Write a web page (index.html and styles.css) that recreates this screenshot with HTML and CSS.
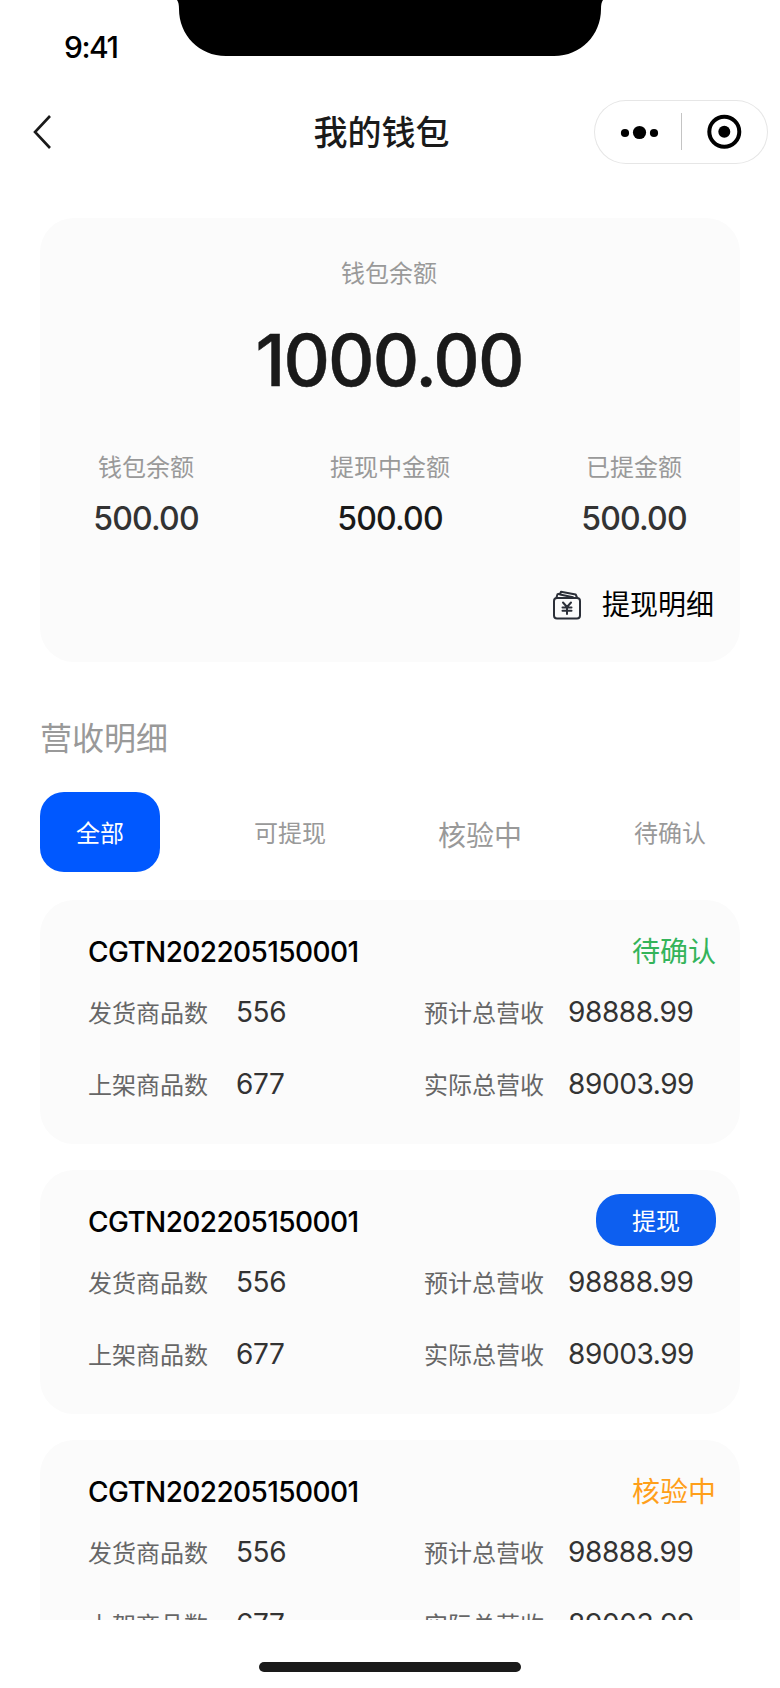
FILE: index.html
```html
<!DOCTYPE html>
<html lang="zh-CN">
<head>
  <meta charset="UTF-8" />
  <title>我的钱包</title>
  <link rel="stylesheet" href="styles.css">
</head>
<body>

  <!-- 状态栏 -->
  <div class="status-bar">
    <span class="time">9:41</span>
    <svg class="notch" width="426" height="56" viewBox="0 0 426 56">
      <path d="M0 0C1.500 2 2 5 2 9C2 35 22 56 49 56H377C404 56 424 35 424 9C424 5 424.500 2 426 0Z" fill="#000" />
    </svg>
  </div>

  <!-- 导航栏 -->
  <div class="nav-bar">
    <svg class="back" width="20" height="36" viewBox="0 0 20 36">
      <path d="M18 2L3 18L18 34" fill="none" stroke="#1a1a1a" stroke-width="2.600" />
    </svg>
    <h1>我的钱包</h1>
    <div class="capsule">
      <svg width="174" height="64" viewBox="0 0 174 64">
        <circle cx="31" cy="33" r="4.100" />
        <circle cx="45.500" cy="32.500" r="6.600" />
        <circle cx="60" cy="33" r="4.100" />
        <rect x="87" y="13" width="1" height="37" fill="#c4c4c4" />
        <circle cx="130.300" cy="31.800" r="15" fill="none" stroke="#000" stroke-width="4" />
        <circle cx="130.300" cy="31.800" r="6" />
      </svg>
    </div>
  </div>

  <!-- 钱包余额 -->
  <div class="wallet">
    <div class="wallet-label">钱包余额</div>
    <div class="wallet-total">1000.00</div>
    <div class="wallet-items">
      <div class="wallet-item">
        <div class="wallet-label">钱包余额</div>
        <div class="amount">500.00</div>
      </div>
      <div class="wallet-item">
        <div class="wallet-label">提现中金额</div>
        <div class="amount dark">500.00</div>
      </div>
      <div class="wallet-item">
        <div class="wallet-label">已提金额</div>
        <div class="amount">500.00</div>
      </div>
    </div>
    <div class="wallet-link">
      <svg width="28" height="30" viewBox="0 0 28 30" fill="none" stroke="#2b2f38" stroke-width="2" stroke-linejoin="round" stroke-linecap="round">
        <rect x="1" y="8" width="26" height="20.500" rx="3" />
        <path d="M3.500 7.500L4.500 4.200L6.500 3.700M7 4.500L8 1.700L22.700 4.500L24 7.500M7 4.500L20 7.200" />
        <path d="M10 12.500L14 17L18 12.500M14 17V24M9.500 17.500H18.500M9.500 20.700H18.500" />
      </svg>
      <span>提现明细</span>
    </div>
  </div>

  <h2>营收明细</h2>

  <!-- 筛选标签 -->
  <div class="tabs">
    <div class="tab active">全部</div>
    <div class="tab">可提现</div>
    <div class="tab large">核验中</div>
    <div class="tab">待确认</div>
  </div>

  <!-- 营收列表 -->
  <div class="list">
    <div class="card">
      <div class="card-head">
        <span class="order-no">CGTN202205150001</span>
        <span class="state green">待确认</span>
      </div>
      <div class="row">
        <span class="label">发货商品数</span><span class="value">556</span>
        <span class="label">预计总营收</span><span class="value">98888.99</span>
      </div>
      <div class="row">
        <span class="label">上架商品数</span><span class="value">677</span>
        <span class="label">实际总营收</span><span class="value">89003.99</span>
      </div>
    </div>

    <div class="card">
      <div class="card-head">
        <span class="order-no">CGTN202205150001</span>
        <button class="withdraw">提现</button>
      </div>
      <div class="row">
        <span class="label">发货商品数</span><span class="value">556</span>
        <span class="label">预计总营收</span><span class="value">98888.99</span>
      </div>
      <div class="row">
        <span class="label">上架商品数</span><span class="value">677</span>
        <span class="label">实际总营收</span><span class="value">89003.99</span>
      </div>
    </div>

    <div class="card">
      <div class="card-head">
        <span class="order-no">CGTN202205150001</span>
        <span class="state orange">核验中</span>
      </div>
      <div class="row">
        <span class="label">发货商品数</span><span class="value">556</span>
        <span class="label">预计总营收</span><span class="value">98888.99</span>
      </div>
      <div class="row">
        <span class="label">上架商品数</span><span class="value">677</span>
        <span class="label">实际总营收</span><span class="value">89003.99</span>
      </div>
    </div>
  </div>

  <div class="home-bar"></div>

</body>
</html>
```
FILE: styles.css
```css
* {
  box-sizing: border-box;
}
body {
  margin: 0;
  width: 780px;
  height: 1688px;
  overflow: hidden;
  background-color: #fff;
  color: #1a1a1a;
  font-family: Inter, "Noto Sans CJK SC", sans-serif;
  font-size: 24px;
}
h1, h2 {
  margin: 0;
}
svg {
  display: block;
}

/* 状态栏 */
.status-bar {
  display: flex;
  height: 88px;
}
.time {
  width: 177px;
  padding-left: 64px;
  padding-top: 27px;
  line-height: 40px;
  font-size: 30px;
  font-weight: 500;
  letter-spacing: -1.5px;
  color: #000;
}

/* 导航栏 */
.nav-bar {
  display: grid;
  grid-template-columns: 1fr auto 1fr;
  align-items: center;
  height: 88px;
  padding: 0 12px 0 32px;
}
.nav-bar h1 {
  margin-left: -37px;
  padding-top: 2px;
  font-size: 34px;
  font-weight: 500;
  line-height: 48px;
}
.capsule {
  justify-self: end;
  width: 174px;
  height: 64px;
  border-radius: 32px;
  box-shadow: inset 0 0 0 1px #e6e6e6;
}

/* 钱包卡片 */
.wallet {
  margin: 42px 40px 0;
  height: 444px;
  padding: 38px 26px 0 46px;
  border-radius: 34px;
  background-color: #fbfbfb;
}
.wallet-label {
  color: #999;
  line-height: 36px;
  text-align: center;
}
.wallet > .wallet-label,
.wallet-total {
  margin-right: 22px;
}
.wallet-total {
  margin-top: 24px;
  line-height: 88px;
  font-size: 72px;
  font-weight: 500;
  letter-spacing: -1.9px;
  -webkit-text-stroke: 0.5px #1a1a1a;
  text-align: center;
}
.wallet-items {
  display: flex;
  justify-content: space-between;
  margin-top: 46px;
  margin-right: 20px;
}
.wallet-item {
  width: 120px;
}
.amount {
  margin-top: 13px;
  line-height: 40px;
  font-size: 32px;
  font-weight: 500;
  letter-spacing: -0.8px;
  text-align: center;
  color: #333;
}
.amount.dark {
  color: #1a1a1a;
}
.wallet-link {
  display: flex;
  justify-content: flex-end;
  align-items: center;
  gap: 21px;
  margin-top: 46px;
  line-height: 40px;
  font-size: 28px;
  color: #000;
}

h2 {
  margin: 53px 40px 0;
  line-height: 48px;
  font-size: 32px;
  font-weight: 400;
  color: #999;
}

/* 筛选标签 */
.tabs {
  display: flex;
  gap: 70px;
  margin: 29px 40px 28px;
}
.tab {
  width: 120px;
  height: 80px;
  line-height: 83px;
  border-radius: 24px;
  text-align: center;
  color: #999;
}
.tab.active {
  background-color: #0058ff;
  color: #fff;
}
.tab.large {
  padding-top: 3px;
  font-size: 28px;
}

/* 营收列表，超出部分裁掉 */
.list {
  height: 720px;
  padding: 0 40px;
  overflow: hidden;
}
.card {
  height: 244px;
  margin-bottom: 26px;
  padding: 24px 24px 0 48px;
  border-radius: 34px;
  background-color: #fbfbfb;
}
.card-head {
  display: flex;
  justify-content: space-between;
  height: 53px;
  line-height: 56px;
}
.order-no {
  font-size: 28px;
  font-weight: 500;
  letter-spacing: -0.6px;
  color: #000;
}
.state {
  font-size: 28px;
}
.green {
  color: #34b45a;
}
.orange {
  color: #ff9f1a;
}
.withdraw {
  width: 120px;
  height: 52px;
  padding: 0;
  border: none;
  border-radius: 24px;
  background-color: #0d5ff0;
  color: #fff;
  font: inherit;
}
.row {
  display: grid;
  grid-template-columns: 148px 188px 144px auto;
  height: 72px;
  line-height: 72px;
}
.label {
  color: #666;
  line-height: 73px;
}
.value {
  font-size: 28px;
  letter-spacing: -0.4px;
  line-height: 70px;
  color: #333;
}

/* 底部横条 */
.home-bar {
  width: 262px;
  height: 10px;
  margin: 42px auto 0;
  border-radius: 5px;
  background-color: #1a1a1a;
}
```
